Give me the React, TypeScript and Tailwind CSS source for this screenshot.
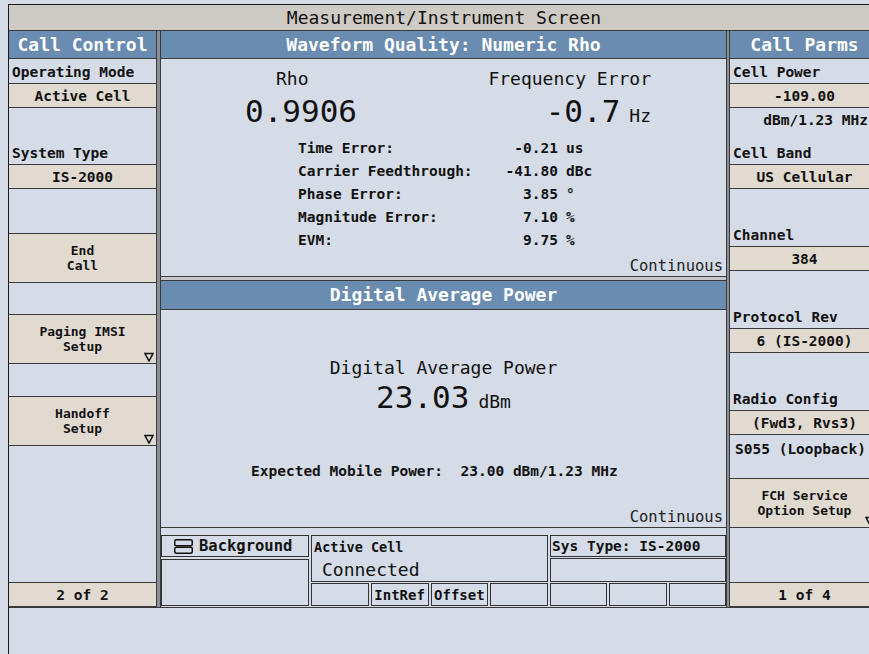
import React from 'react';

// Agilent-style measurement screen: soft-key columns left/right, result panes in the middle
const line = 'border-b border-[#3a3a3a]';
const tan = 'bg-[#e1dad0]';

const DownArrow = ({ className }: { className: string }) => (
  <svg className={className} width="10" height="10" viewBox="0 0 10 10">
    <path d="M1 1.5H9L5 9Z" fill="none" stroke="#111" strokeWidth="1.5" />
  </svg>
);

const BackgroundIcon = () => (
  <svg width="19" height="15" viewBox="0 0 19 15">
    <rect x="0.75" y="0.75" width="17.5" height="6" rx="1.5" fill="none" stroke="#111" strokeWidth="1.5" />
    <rect x="0.75" y="8.25" width="17.5" height="6" rx="1.5" fill="none" stroke="#111" strokeWidth="1.5" />
  </svg>
);

const Header = ({ children }: { children: React.ReactNode }) => (
  <div className={`h-[28px] ${line} bg-[#6a8cb0] flex items-center justify-center text-white text-[18px] font-bold leading-[18px]`}>
    {children}
  </div>
);

// plain light row, label sits at the bottom
const Label = ({ h, children }: { h: string; children?: React.ReactNode }) => (
  <div className={`${h} ${line} flex items-end pl-[3px] pb-[3px] text-[14.5px] font-bold leading-[16px]`}>{children}</div>
);

// tan value field
const Value = ({ children }: { children: React.ReactNode }) => (
  <div className={`h-[24px] ${line} ${tan} flex items-center justify-center text-[14.5px] font-bold leading-[16px]`}>
    {children}
  </div>
);

// tan two-line soft key
const Key = ({ top, bottom, menu, arrow }: { top: string; bottom: string; menu?: boolean; arrow?: string }) => (
  <div className={`relative h-[49px] ${line} ${tan} flex flex-col items-center justify-center text-[13px] font-bold leading-[15.5px]`}>
    <span>{top}</span>
    <span>{bottom}</span>
    {menu && <DownArrow className={arrow ?? 'absolute right-[2px] bottom-[1px]'} />}
  </div>
);

const Blank = ({ h }: { h: string }) => <div className={`${h} ${line}`} />;

const Separator = ({ w }: { w: string }) => (
  <div className={`${w} border-x border-[#3a3a3a] bg-[#8c8f94]`} />
);

const Box = ({ className, children }: { className: string; children?: React.ReactNode }) => (
  <div className={`border border-[#333] ${className}`}>{children}</div>
);

const details = [
  ['Time Error:', '-0.21', 'us'],
  ['Carrier Feedthrough:', '-41.80', 'dBc'],
  ['Phase Error:', '3.85', '°'],
  ['Magnitude Error:', '7.10', '%'],
  ['EVM:', '9.75', '%'],
];

export default function App() {
  return (
    <div className="w-[869px] h-[654px] overflow-hidden bg-[#d5dce7] text-[#111] whitespace-nowrap font-['DejaVu_Sans_Mono',monospace]">
      <div className="ml-[8px] mt-[4px] w-[871px] h-[650px] border-l border-t border-[#1a1a1a] flex flex-col">
        <div className={`h-[26px] ${line} bg-[#cecac4] flex items-center justify-center text-[18px] leading-[18px]`}>
          Measurement/Instrument Screen
        </div>

        <div className={`h-[577px] ${line} flex`}>
          {/* Call Control column */}
          <div className="w-[147px] flex flex-col">
            <Header>Call Control</Header>
            <Label h="h-[25px]">Operating Mode</Label>
            <Value>Active Cell</Value>
            <Label h="h-[57px]">System Type</Label>
            <Value>IS-2000</Value>
            <Blank h="h-[45px]" />
            <Key top="End" bottom="Call" />
            <Blank h="h-[32px]" />
            <Key top="Paging IMSI" bottom="Setup" menu />
            <Blank h="h-[33px]" />
            <Key top="Handoff" bottom="Setup" menu />
            <Blank h="h-[137px]" />
            <Value>2 of 2</Value>
          </div>

          <Separator w="w-[5px]" />

          {/* measurement panes */}
          <div className="w-[565px] flex flex-col">
            <Header>Waveform Quality: Numeric Rho</Header>
            <div className={`h-[218px] ${line} flex flex-col`}>
              <div className="mt-[11px] w-[490px] flex justify-between text-[18px] leading-[18px]">
                <span className="ml-[115px]">Rho</span>
                <span>Frequency Error</span>
              </div>
              <div className="mt-[8px] w-[490px] flex justify-between items-baseline">
                <span className="ml-[84px] text-[31px] leading-[31px]">0.9906</span>
                <span className="flex items-baseline gap-[9px]">
                  <span className="text-[31px] leading-[31px]">-0.7</span>
                  <span className="text-[18px] leading-[18px]">Hz</span>
                </span>
              </div>
              <div className="mt-[10px] flex flex-col text-[14.5px] font-bold leading-[23px]">
                {details.map(([label, value, unit]) => (
                  <div key={label} className="flex">
                    <span className="ml-[137px] w-[180px]">{label}</span>
                    <span className="w-[80px] text-right">{value}</span>
                    <span className="ml-[8px]">{unit}</span>
                  </div>
                ))}
              </div>
              <div className="mt-auto self-end pr-[3px] pb-[2px] text-[15.5px] leading-[16px] text-[#222]">Continuous</div>
            </div>

            <div className="h-[3px] bg-[#c4c7cc]" />

            <div className="h-[30px] border-y border-[#3a3a3a] bg-[#6a8cb0] flex items-center justify-center text-white text-[18px] font-bold leading-[18px]">
              Digital Average Power
            </div>
            <div className={`h-[218px] ${line} flex flex-col`}>
              <div className="mt-[49px] text-center text-[18px] leading-[18px]">Digital Average Power</div>
              <div className="mt-[5px] flex justify-center items-baseline gap-[9px]">
                <span className="text-[31px] leading-[31px]">23.03</span>
                <span className="text-[18px] leading-[18px]">dBm</span>
              </div>
              <div className="mt-[49px] ml-[90px] text-[14.5px] font-bold leading-[18px] whitespace-pre">
                Expected Mobile Power:  23.00 dBm/1.23 MHz
              </div>
              <div className="mt-auto self-end pr-[3px] pb-[2px] text-[15.5px] leading-[16px] text-[#222]">Continuous</div>
            </div>

            <div className="h-[7px]" />

            {/* status bar */}
            <div className="h-[72px] flex gap-[2px]">
              <div className="w-[148px] flex flex-col gap-[2px]">
                <Box className="h-[22px] flex items-center gap-[6px] pl-[12px] text-[15.5px] font-bold leading-[16px]">
                  <BackgroundIcon />
                  Background
                </Box>
                <Box className="h-[47px]" />
              </div>
              <div className="w-[237px] flex flex-col gap-[1px]">
                <Box className="h-[47px] flex flex-col pl-[2px] pt-[4px]">
                  <span className="text-[13.5px] font-bold leading-[14px]">Active Cell</span>
                  <span className="mt-[7px] ml-[8px] text-[18px] leading-[18px]">Connected</span>
                </Box>
                <div className="h-[23px] grid grid-cols-4 gap-[2px] text-[14px] font-bold leading-[16px]">
                  <Box className="" />
                  <Box className="flex items-center justify-center">IntRef</Box>
                  <Box className="flex items-center justify-center">Offset</Box>
                  <Box className="" />
                </div>
              </div>
              <div className="w-[176px] flex flex-col gap-[1px]">
                <Box className="h-[22px] flex items-center pl-[1px] text-[14.5px] font-bold leading-[16px]">Sys Type: IS-2000</Box>
                <Box className="h-[24px]" />
                <div className="h-[23px] grid grid-cols-3 gap-[2px]">
                  <Box className="" />
                  <Box className="" />
                  <Box className="" />
                </div>
              </div>
            </div>
          </div>

          <Separator w="w-[4px]" />

          {/* Call Parms column */}
          <div className="w-[149px] flex flex-col">
            <Header>Call Parms</Header>
            <Label h="h-[25px]">Cell Power</Label>
            <Value>-109.00</Value>
            <div className={`h-[57px] ${line} flex flex-col justify-between text-[14.5px] font-bold leading-[16px]`}>
              <span className="pt-[4px] pr-[11px] text-right">dBm/1.23 MHz</span>
              <span className="pl-[3px] pb-[3px]">Cell Band</span>
            </div>
            <Value>US Cellular</Value>
            <Label h="h-[58px]">Channel</Label>
            <Value>384</Value>
            <Label h="h-[58px]">Protocol Rev</Label>
            <Value>6 (IS-2000)</Value>
            <Label h="h-[58px]">Radio Config</Label>
            <Value>(Fwd3, Rvs3)</Value>
            <div className={`h-[44px] ${line} pl-[5px] pt-[6px] text-[14.5px] font-bold leading-[16px]`}>S055 (Loopback)</div>
            <Key top="FCH Service" bottom="Option Setup" menu arrow="absolute right-[4px] bottom-[1px]" />
            <Blank h="h-[55px]" />
            <Value>1 of 4</Value>
          </div>
        </div>
      </div>
    </div>
  );
}
